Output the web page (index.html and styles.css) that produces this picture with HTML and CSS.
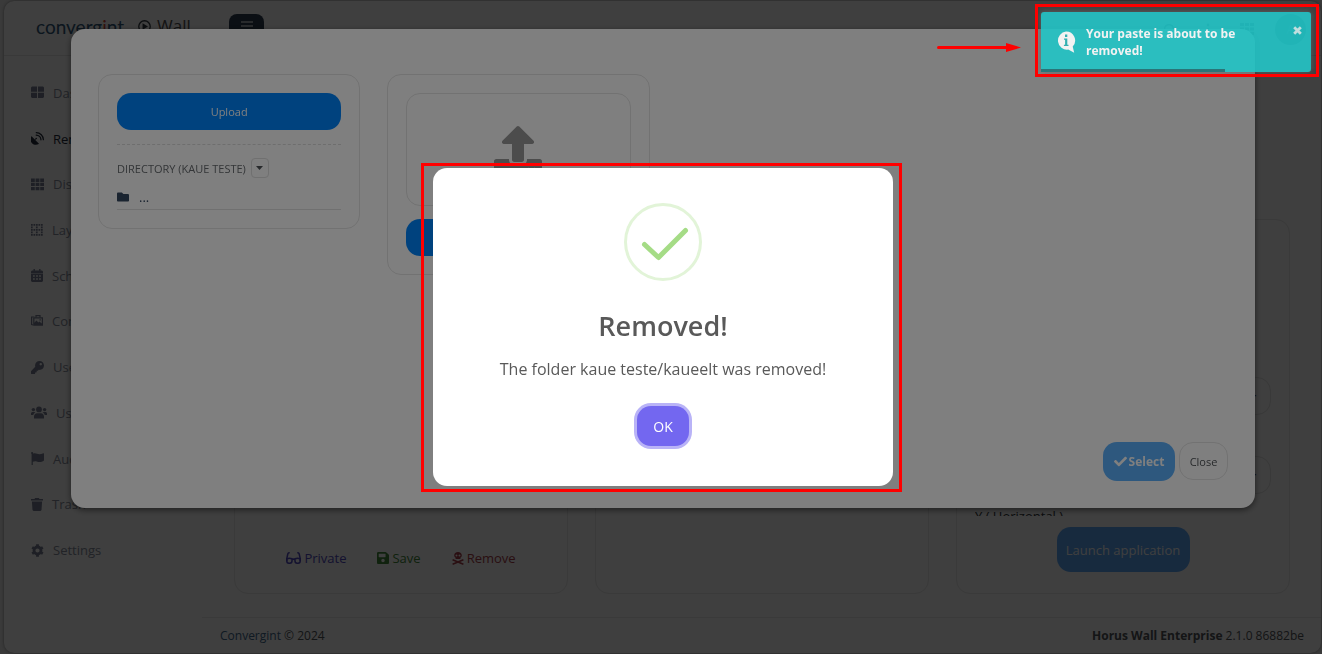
FILE: index.html
```html
<!DOCTYPE html>
<html lang="en">
<head>
<meta charset="utf-8">
<title>Horus Wall</title>
<link rel="stylesheet" href="styles.css">
</head>
<body>
<div class="shell">
  <header class="topbar">
    <a class="brand" href="#">converg<span class="brand-accent">i</span>nt</a>
    <span class="product">
      <svg width="13" height="13" viewBox="0 0 12 12"><circle cx="6" cy="6" r="5.3" fill="none" stroke="currentColor" stroke-width="1.2"/><path d="M4.2 3l5 3-5 3z" fill="currentColor"/></svg>
      Wall
    </span>
    <button class="toggle" aria-label="Toggle menu">
      <svg width="12" height="10" viewBox="0 0 12 10" stroke="currentColor" stroke-width="1.6"><path d="M0 1h12M0 5h12M0 9h12"/></svg>
    </button>
    <nav class="tools" aria-label="Tools">
      <button aria-label="Search"><svg width="13" height="13" viewBox="0 0 13 13" fill="none" stroke="currentColor" stroke-width="1.6"><circle cx="6" cy="6" r="4.4"/><path d="M9 9l3.500 3.500"/></svg></button>
      <button aria-label="More"><svg width="4" height="13" viewBox="0 0 4 13" fill="currentColor"><circle cx="2" cy="2" r="1.400"/><circle cx="2" cy="6.500" r="1.400"/><circle cx="2" cy="11" r="1.400"/></svg></button>
      <button aria-label="Apps"><svg width="14" height="12" viewBox="0 0 14 12" fill="none" stroke="currentColor" stroke-width="3" stroke-dasharray="4 1"><path d="M0 1.500h14M0 6h14M0 10.500h14"/></svg></button>
      <button class="avatar" aria-label="Account">A</button>
    </nav>
  </header>
  <div class="body">
    <nav class="sidebar" aria-label="Main">
      <a href="#"><svg width="13" height="13" viewBox="0 0 13 13"><path d="M1 .5h5v5.300H0V1.500zM7 .5h5l1 1v4.300H7zM0 6.800h6v5.300H1l-1-1zM7 6.800h6v4.300l-1 1H7z"/></svg>Dashboard</a>
      <a class="active" href="#"><svg width="13" height="13" viewBox="0 0 512 512"><path d="M305 449c6 6 6 16-2 21-82 51-191 41-262-30S-40 260 11 178c5-8 15-8 21-2l116 117 27-27c-1-3-2-7-2-11 0-18 14-32 32-32s32 14 32 32-14 32-32 32c-4 0-8-1-11-2l-27 27z"/><path d="M208 24c152 0 280 128 280 280M204 120c104 0 188 84 188 188" fill="none" stroke="currentColor" stroke-width="48" stroke-linecap="round"/></svg>Remote</a>
      <a href="#"><svg width="13" height="13" viewBox="0 0 13 13"><path d="M0 .500h3.800v3.400H0zM4.600.5h3.800v3.400H4.600zM9.200.5H13v3.400H9.200zM0 4.700h3.800v3.400H0zM4.600 4.700h3.800v3.400H4.600zM9.200 4.700H13v3.400H9.200zM0 8.900h3.800v3.400H0zM4.600 8.900h3.800v3.400H4.600zM9.200 8.900H13v3.400H9.200z"/></svg>Displays</a>
      <a href="#"><svg width="12" height="12" viewBox="0 0 12 12"><path d="M0 .8h12M0 5.800h12M0 10.800h12M.8 0v12M5.800 0v12M10.800 0v12" fill="none" stroke="currentColor" stroke-width="1.700" stroke-dasharray="1.700 .8"/></svg>Layouts</a>
      <a href="#"><svg width="12" height="13" viewBox="0 0 12 13" fill-rule="evenodd"><path d="M2.500 0h1.400v1.500h4.200V0h1.400v1.500H11l1 1V4H0V2.500l1-1h1.500zM0 4.600h12V12l-1 1H1l-1-1zm2 1.600v1.500h1.800V6.200zm3.100 0v1.500h1.800V6.200zm3 0v1.500h1.800V6.200zM2 9.300v1.500h1.800V9.300zm3.100 0v1.500h1.800V9.300zm3 0v1.500h1.800V9.300z"/></svg>Schedules</a>
      <a href="#"><svg width="12" height="12" viewBox="0 0 12 12"><path d="M5 2.500V.6h4v1.900M.600 2v7.500l1.600.5" fill="none" stroke="currentColor" stroke-width="1.200"/><path fill-rule="evenodd" d="M2.200 2.300H12v8.400H2.200zm1.200 1.200v4.300l2-2.200 2 2 1-1 2.400 2V3.500zM8.500 4.300h1.300v1.300H8.500zM0 1.400h3.500v1H0z"/></svg>Contents</a>
      <a href="#"><svg width="13" height="13" viewBox="0 0 512 512"><path d="M512 176.001C512 273.203 433.202 352 336 352c-11.220 0-22.190-1.062-32.827-3.069l-24.012 27.014A23.999 23.999 0 0 1 261.223 384H224v40c0 13.255-10.745 24-24 24h-40v40c0 13.255-10.745 24-24 24H24c-13.255 0-24-10.745-24-24v-78.059c0-6.365 2.529-12.470 7.029-16.971l161.802-161.802C163.108 213.814 160 195.271 160 176 160 78.798 238.797.001 335.999 0 433.488-.001 512 78.511 512 176.001zM336 128c0 26.510 21.490 48 48 48s48-21.490 48-48-21.490-48-48-48-48 21.490-48 48z"/></svg>Users</a>
      <a href="#"><svg width="16" height="13" viewBox="0 0 16 13"><circle cx="8" cy="3.400" r="2.900"/><circle cx="2.400" cy="3.600" r="1.700"/><circle cx="13.600" cy="3.600" r="1.700"/><path d="M3 12.400v-2C3 8.500 4.300 7.200 6 7.200h4c1.700 0 3 1.300 3 3.200v2zM0 9V7.600C0 6.600.7 6 1.600 6h1.600c.6 0 .9.200 1.200.5C3.200 7 2.500 8 2.300 9zM16 9V7.600c0-1-.7-1.600-1.600-1.600h-1.600c-.6 0-.9.200-1.200.5 1.200.5 1.900 1.500 2.100 2.500z"/></svg>User groups</a>
      <a href="#"><svg width="13" height="13" viewBox="0 0 13 13"><path d="M0 1.200a1.100 1.100 0 0 1 2.200 0v.5C4.500.7 6.200 2.300 8.300 2.300c1.500 0 2.700-.4 4-1 .4-.2.700 0 .7.400v6.800c-2.900 2.100-5.300 1.500-7.300.9-1.400-.4-2.700-.2-3.900.3V13H.6V2z"/></svg>Audit</a>
      <a href="#"><svg width="12" height="13" viewBox="0 0 12 13"><path d="M0 1h3.500l.6-1h3.800l.6 1H12v1.500H0zM.900 3.400h10.200l-.6 8.600-1 1H2.500l-1-1z"/></svg>Trash</a>
      <a href="#"><svg width="13" height="13" viewBox="0 0 13 13"><circle cx="6.500" cy="6.500" r="3.500" fill="none" stroke="currentColor" stroke-width="2.800"/><path d="M6.500.3v2M6.500 10.700v2M1.200 3.400l1.700 1M10.100 8.600l1.700 1M1.200 9.600l1.700-1M10.100 4.400l1.700-1" stroke="currentColor" stroke-width="2.800"/></svg>Settings</a>
    </nav>
    <div class="content">
      <main class="cards">
        <section class="panel panel-links">
          <a class="act private" href="#"><svg width="15" height="12" viewBox="0 0 15 12" fill="none" stroke="currentColor" stroke-width="1.500"><path d="M3.700.8H3C2.300.8 2 1.200 1.800 2L.8 6.500V9M11.300.8h.7c.7 0 1 .4 1.200 1.200l1 4.500V9M6 7.500c1-.5 2-.5 3 0"/><path d="M.8 6.700c1.800-.5 3.400-.5 5.200 0V9c0 1.300-.9 2.200-2.200 2.200h-.9C1.600 11.200.8 10.300.8 9zM9 6.700c1.800-.5 3.400-.5 5.200 0V9c0 1.300-.8 2.200-2.100 2.200h-.9C9.900 11.200 9 10.300 9 9z"/></svg>Private</a>
          <a class="act save" href="#"><svg width="12" height="14" viewBox="0 0 448 512" fill="currentColor"><path d="M433.941 129.941l-83.882-83.882A48 48 0 0 0 316.118 32H48C21.490 32 0 53.490 0 80v352c0 26.510 21.490 48 48 48h352c26.510 0 48-21.490 48-48V163.882a48 48 0 0 0-14.059-33.941zM224 416c-35.346 0-64-28.654-64-64 0-35.346 28.654-64 64-64s64 28.654 64 64c0 35.346-28.654 64-64 64zm96-304.520V212c0 6.627-5.373 12-12 12H76c-6.627 0-12-5.373-12-12V108c0-6.627 5.373-12 12-12h228.520c3.183 0 6.235 1.264 8.485 3.515l3.480 3.480A11.996 11.996 0 0 1 320 111.480z"/></svg>Save</a>
          <a class="act remove" href="#"><svg width="12" height="13" viewBox="0 0 12 13" fill="currentColor"><path fill-rule="evenodd" d="M6 0c2.200 0 3.800 1.300 3.800 3.200 0 1.100-.5 1.900-1.400 2.500v1.200H3.600V5.700C2.700 5.100 2.200 4.300 2.200 3.200 2.200 1.300 3.800 0 6 0zM4.500 2.500a1 1 0 1 0 0 2 1 1 0 0 0 0-2zm3 0a1 1 0 1 0 0 2 1 1 0 0 0 0-2z"/><path d="M.6 7.800L11.400 12.300M11.400 7.800L.6 12.300" stroke="currentColor" stroke-width="1.500"/></svg>Remove</a>
        </section>
        <section class="panel"></section>
        <section class="panel panel-launch">
          <div class="fields">
            <button class="stepper">+</button>
            <button class="stepper">+</button>
            <span class="field-name">Y ( Horizontal )</span>
          </div>
          <button class="launch">Launch application</button>
        </section>
      </main>
      <footer class="footer">
        <span><a href="#">Convergint</a> © 2024</span>
        <span><b>Horus Wall Enterprise</b> 2.1.0 86882be</span>
      </footer>
    </div>
  </div>
</div>

<div class="overlay overlay-top">
  <div class="modal" role="dialog" aria-label="Directory">
    <div class="modal-grid">
      <section class="box">
        <button class="primary">Upload</button>
        <hr class="dashed">
        <div class="dir">DIRECTORY (KAUE TESTE)
          <button class="caret" aria-label="Open directory menu"><svg width="7" height="4" viewBox="0 0 7 4"><path d="M0 0h7L3.500 4z" fill="currentColor"/></svg></button>
        </div>
        <a class="folder" href="#"><svg width="12" height="12" viewBox="0 0 512 512"><path fill="currentColor" d="M464 128H272l-64-64H48C21.490 64 0 85.490 0 112v288c0 26.510 21.490 48 48 48h416c26.510 0 48-21.490 48-48V176c0-26.510-21.490-48-48-48z"/></svg>...</a>
      </section>
      <section class="box">
        <div class="drop">
          <svg width="48" height="48" viewBox="0 0 512 512"><path fill="currentColor" d="M296 384h-80c-13.300 0-24-10.700-24-24V192h-87.700c-17.800 0-26.700-21.500-14.100-34.100L242.300 5.700c7.500-7.500 19.800-7.500 27.300 0l152.200 152.200c12.600 12.600 3.700 34.100-14.100 34.100H320v168c0 13.300-10.700 24-24 24zm216-8v112c0 13.300-10.700 24-24 24H24c-13.300 0-24-10.700-24-24V376c0-13.300 10.700-24 24-24h136v8c0 30.900 25.100 56 56 56h80c30.900 0 56-25.100 56-56v-8h136c13.300 0 24 10.700 24 24zm-124 88c0-11-9-20-20-20s-20 9-20 20 9 20 20 20 20-9 20-20zm64 0c0-11-9-20-20-20s-20 9-20 20 9 20 20 20 20-9 20-20z"/></svg>
        </div>
        <button class="primary" aria-label="Choose file"></button>
      </section>
    </div>
    <div class="modal-actions">
      <button class="select"><svg width="13" height="13" viewBox="0 0 512 512"><path fill="currentColor" d="M173.898 439.404l-166.400-166.400c-9.997-9.997-9.997-26.206 0-36.204l36.203-36.204c9.997-9.998 26.207-9.998 36.204 0L192 312.690 432.095 72.596c9.997-9.997 26.207-9.997 36.204 0l36.203 36.204c9.997 9.997 9.997 26.206 0 36.204l-294.400 294.401c-9.998 9.997-26.207 9.997-36.204-.001z"/></svg>Select</button>
      <button class="close">Close</button>
    </div>
  </div>
</div>

<div class="overlay overlay-center">
  <div class="alert" role="alertdialog" aria-labelledby="alert-title">
    <svg class="alert-icon" width="78" height="78" viewBox="0 0 78 78" fill="none"><circle cx="39" cy="39" r="37.500" stroke="#e2f4d8" stroke-width="3"/><path d="M20.500 41.500L34.500 54.500L61.500 27.500" stroke="#a5dc86" stroke-width="5" stroke-linecap="round" stroke-linejoin="round"/></svg>
    <h2 id="alert-title">Removed!</h2>
    <p>The folder kaue teste/kaueelt was removed!</p>
    <button class="ok">OK</button>
    <div class="mark mark-alert"></div>
  </div>
</div>

<div class="toast-area">
  <svg class="arrow" width="84" height="10" viewBox="0 0 84 10"><path d="M1.500 5.500h70" stroke="#f00" stroke-width="3" stroke-linecap="round"/><path d="M69 1l15 4.500L69 10z" fill="#f00"/></svg>
  <div class="toast" role="status">
    <svg width="19" height="22" viewBox="0 0 19 22"><path d="M9 .5a9 9 0 0 1 6.700 15.100L17.200 21.800l-6-3.200A9.100 9.100 0 1 1 9 .5z" fill="#fff"/><path d="M8 3.600h2.300v2.300H8zM7 7.500h3.300v6.200h1.200V15H6.900v-1.300h1.200V8.800H7z" fill="#2bb5b7"/></svg>
    <div class="toast-text">Your paste is about to be removed!</div>
    <button aria-label="Close notification"><svg width="9" height="9" viewBox="0 0 9 9"><path d="M1.200 1.200l6.600 6.600M7.800 1.200L1.200 7.800" stroke="#fff" stroke-width="2.800"/></svg></button>
    <div class="toast-progress"></div>
  </div>
  <div class="mark mark-toast"></div>
</div>
</body>
</html>
```
FILE: styles.css
```css
* { box-sizing: border-box; }
body {
  margin: 0;
  background: #e8e8e8;
  font-family: "Open Sans", "Noto Sans", sans-serif;
  font-size: 13px;
  color: #505458;
}
button { font: inherit; cursor: pointer; border: 0; padding: 0; }
a { color: inherit; text-decoration: none; }

.shell {
  display: flex;
  flex-direction: column;
  min-height: calc(100vh - 2px);
  margin: 1px 1px 1px 4px;
  border-radius: 10px;
  background: #fcfcfc;
  box-shadow: 0 0 3px #888;
}
.topbar {
  display: flex;
  align-items: flex-start;
  height: 55px;
  padding: 12px 15px 0 32px;
  border-bottom: 1px solid #e4e4e4;
}
.brand {
  width: 102px;
  font: 19px/27px Lato, sans-serif;
  color: #305878;
}
.brand-accent { color: #d04838; }
.product {
  display: flex;
  align-items: center;
  gap: 6px;
  width: 91px;
  font-size: 17px;
  line-height: 26px;
  color: #505050;
}
.product svg { color: #303840; }
.toggle {
  display: grid;
  place-items: center;
  width: 35px;
  height: 24px;
  margin-top: 1px;
  border-radius: 8px;
  background: #2c3c50;
  color: #c8ccd0;
}
.tools {
  display: flex;
  align-items: center;
  gap: 30px;
  height: 32px;
  margin-left: auto;
}
.tools button { display: grid; background: none; color: #283440; }
.tools .avatar {
  place-items: center;
  width: 31px;
  height: 31px;
  margin-left: -9px;
  border-radius: 50%;
  background: #506478;
  color: #a0acb8;
}

.body { display: flex; flex: 1; }
.sidebar {
  display: grid;
  grid-auto-rows: 1fr;
  align-self: flex-start;
  width: 198px;
  min-height: 503px;
  margin-top: 14px;
  padding-left: 27px;
  color: #888e9c;
  font-weight: 500;
}
.sidebar a { display: flex; align-items: center; gap: 9px; }
.sidebar svg { fill: currentColor; color: #787f94; }
.sidebar .active, .sidebar .active svg { color: #202838; }

.content { display: flex; flex: 1; flex-direction: column; }
.cards {
  display: grid;
  grid-template-columns: repeat(3, 1fr);
  flex: 1;
  gap: 27px;
  padding: 163px 31px 23px 32px;
}
.panel { border: 1px solid #e9e9e9; border-radius: 14px; }
.panel-links {
  display: flex;
  align-items: flex-end;
  justify-content: center;
  gap: 31px;
  padding-bottom: 25px;
}
.act { display: flex; align-items: center; gap: 3px; line-height: 20px; }
.private { color: #5048c0; }
.save { color: #408838; }
.remove { color: #a83c48; }
.panel-launch {
  display: flex;
  flex-direction: column;
  align-items: center;
  justify-content: flex-end;
  gap: 11px;
  padding: 0 18px 21px;
}
.fields {
  display: flex;
  flex-direction: column;
  align-self: stretch;
  height: 139px;
  overflow: hidden;
}
.stepper {
  flex: none;
  align-self: flex-end;
  width: 38px;
  height: 38px;
  margin-bottom: 41px;
  border: 1px solid #e4e4e4;
  border-radius: 14px;
  background: none;
  color: #484c50;
  font-size: 16px;
}
.stepper + .stepper { margin-bottom: 12px; }
.field-name { color: #303438; line-height: 20px; }
.launch {
  width: 133px;
  height: 45px;
  border-radius: 14px;
  background: #5ca8f8;
  color: #fff;
}
.footer {
  display: flex;
  align-items: center;
  justify-content: space-between;
  height: 36px;
  padding: 0 17px 0 18px;
  border-top: 1px solid #e9e9e9;
  font-size: 12px;
}
.footer a { color: #40688c; }

.overlay {
  position: fixed;
  inset: 0;
  display: flex;
  justify-content: center;
  padding-left: 4px;
  background: rgba(0, 0, 0, 0.5);
}
.overlay-top { align-items: flex-start; padding-top: 29px; }
.overlay-center { align-items: center; }

.modal {
  display: flex;
  flex-direction: column;
  width: calc(100% - 134px);
  min-height: 479px;
  padding: 45px 27px 27px;
  border-radius: 14px;
  background: #fff;
  box-shadow: 0 2px 6px rgba(0, 0, 0, 0.5);
}
.modal-grid {
  display: grid;
  grid-template-columns: repeat(4, 1fr);
  flex: 1;
  align-items: start;
  gap: 27px;
}
.box {
  padding: 18px;
  border: 1px solid #e4e4e4;
  border-radius: 14px;
}
.primary {
  display: block;
  width: 100%;
  height: 37px;
  border-radius: 14px;
  background: #0084fc;
  color: #fff;
  font-size: 11px;
}
.dashed { margin: 14px 0 13px; border: 0; border-top: 1px dashed #dcdcdc; }
.dir { display: flex; align-items: center; gap: 5px; height: 20px; font-size: 11px; color: #686c70; }
.caret {
  display: grid;
  place-items: center;
  width: 18px;
  height: 20px;
  border: 1px solid #e0e0e0;
  border-radius: 4px;
  background: none;
  color: #505458;
}
.folder {
  display: flex;
  align-items: center;
  gap: 10px;
  height: 32px;
  padding-top: 6px;
  border-bottom: 1px solid #e0e0e0;
  color: #344860;
}
.drop {
  display: grid;
  place-items: center;
  height: 113px;
  margin-bottom: 13px;
  border: 1px solid #e4e4e4;
  border-radius: 14px;
  color: #989898;
}
.modal-actions { display: flex; justify-content: flex-end; gap: 4px; font-size: 11px; }
.select {
  display: flex;
  align-items: center;
  justify-content: center;
  gap: 2px;
  width: 72px;
  height: 39px;
  border-radius: 14px;
  background: #5cb0fc;
  color: #fff;
  font-size: 12px;
  font-weight: 700;
}
.close {
  width: 49px;
  height: 38px;
  border: 1px solid #e4e4e4;
  border-radius: 14px;
  background: none;
  color: #505458;
}

.alert {
  position: relative;
  display: flex;
  flex-direction: column;
  align-items: center;
  width: 460px;
  padding: 35px 20px 40px;
  border-radius: 14px;
  background: #fff;
  color: #595959;
}
.alert h2 { margin: 25px 0 12px; font-size: 27px; line-height: 40px; font-weight: 600; }
.alert p { margin: 0 0 26px; font-size: 16px; line-height: 22px; }
.ok {
  width: 52px;
  height: 40px;
  border-radius: 14px;
  background: #7367f0;
  box-shadow: 0 0 0 3px #b9b3f7;
  color: #fff;
  font-size: 14px;
  font-weight: 500;
}
.mark { position: absolute; border: 3px solid #f00; pointer-events: none; }
.mark-alert { inset: -5px -9px -6px -12px; }

.toast-area { position: fixed; top: 12px; right: 11px; width: 270px; }
.mark-toast { inset: -8px -8px -5px -6px; }
.arrow { position: absolute; top: 30px; right: 290px; }
.toast {
  position: relative;
  display: flex;
  align-items: center;
  height: 60px;
  padding: 0 9px 0 16px;
  border-radius: 3px;
  background: #23c5c7;
  box-shadow: 0 0 6px #666;
  opacity: 0.9;
}
.toast-text { flex: 1; margin-left: 10px; padding-right: 40px; color: #fff; font-size: 12px; font-weight: 700; line-height: 17px; }
.toast button { align-self: flex-start; display: grid; margin-top: 14px; background: none; opacity: 0.8; }
.toast-progress { position: absolute; left: 0; bottom: 0; width: 68%; height: 3px; background: #217578; }
```
